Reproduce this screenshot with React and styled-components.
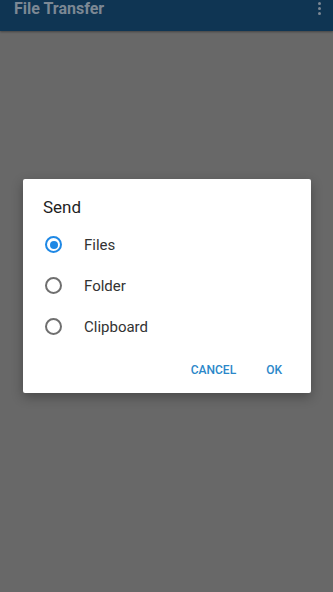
import React, { useState } from 'react'
import styled, { createGlobalStyle } from 'styled-components'

const GlobalStyle = createGlobalStyle`
    html, body {
        margin: 0;
        padding: 0;
        height: 100%;
        background: #686868;
    }
    #root {
        height: 100%;
    }
    * {
        box-sizing: border-box;
    }
`

const Screen = styled.div`
    height: 100vh;
    display: flex;
    flex-direction: column;
    font-family: Roboto, "Liberation Sans", sans-serif;
    background: #686868;
`

const AppBar = styled.div`
    height: 31px;
    flex-shrink: 0;
    background: #0f3553;
    display: flex;
    align-items: flex-start;
    justify-content: space-between;
    padding: 0 12px 0 14px;
    box-shadow: 0 1px 2px rgba(0,0,0,.35);
`

const BarTitle = styled.h1`
    margin: 0;
    font-size: 16px;
    line-height: 17px;
    font-weight: 700;
    color: #7c8894;
`

const MenuDots = styled.div`
    display: flex;
    flex-direction: column;
    gap: 2px;
    padding-top: 2px;
    span {
        width: 3px;
        height: 3px;
        border-radius: 50%;
        background: #7c8894;
    }
`

const Scrim = styled.div`
    flex: 1;
    padding: 148px 22px 0 23px;
`

const Dialog = styled.div`
    width: 288px;
    background: #fff;
    border-radius: 2px;
    box-shadow: 0 4px 12px rgba(0,0,0,.3);
    padding: 16px 0 5px;
`

const Title = styled.h2`
    margin: 0 0 5px;
    padding: 0 20px;
    font-size: 17px;
    line-height: 24px;
    font-weight: 400;
    color: #1f1f1f;
`

const Option = styled.label`
    display: flex;
    align-items: center;
    height: 41px;
    padding-left: 22px;
    font-size: 15px;
    color: #333;
    cursor: pointer;
`

const Radio = styled.span`
    width: 17px;
    height: 17px;
    border-radius: 50%;
    border: 2px solid ${p => (p.checked ? '#1e88e5' : '#6f6f6f')};
    display: flex;
    align-items: center;
    justify-content: center;
    margin-right: 22px;
    &::after {
        content: '';
        width: 8px;
        height: 8px;
        border-radius: 50%;
        background: ${p => (p.checked ? '#1e88e5' : 'transparent')};
    }
`

const Actions = styled.div`
    display: flex;
    justify-content: flex-end;
    gap: 14px;
    padding: 5px 21px 0 0;
    height: 41px;
`

const TextButton = styled.button`
    border: none;
    background: none;
    height: 36px;
    padding: 0 8px;
    font-family: inherit;
    font-size: 12px;
    font-weight: 500;
    letter-spacing: 0;
    color: #2b87c9;
    text-transform: uppercase;
`

const options = ['Files', 'Folder', 'Clipboard']

export default function App() {
    const [selected, setSelected] = useState('Files')
    return (
        <Screen>
            <GlobalStyle />
            <AppBar>
                <BarTitle>File Transfer</BarTitle>
                <MenuDots><span /><span /><span /></MenuDots>
            </AppBar>
            <Scrim>
                <Dialog>
                    <Title>Send</Title>
                    {options.map(o => (
                        <Option key={o} onClick={() => setSelected(o)}>
                            <Radio checked={selected === o} />
                            {o}
                        </Option>
                    ))}
                    <Actions>
                        <TextButton>Cancel</TextButton>
                        <TextButton>OK</TextButton>
                    </Actions>
                </Dialog>
            </Scrim>
        </Screen>
    )
}
